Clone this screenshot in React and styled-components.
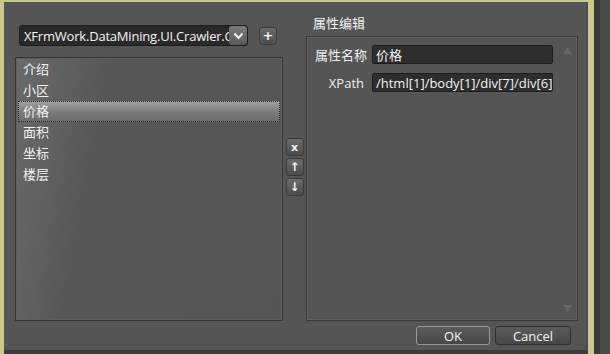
import styled, { createGlobalStyle } from "styled-components";

const GlobalStyle = createGlobalStyle`
  html, body {
    margin: 0;
    padding: 0;
    background: #3f3f3f;
  }
  body {
    font-family: "Open Sans", "Noto Sans CJK SC", sans-serif;
  }
`;

const Frame = styled.div`
  display: grid;
  grid-template-columns: 4px 584px 6px 16px;
  width: 610px;
  height: 354px;
  overflow: hidden;
`;

const YellowEdge = styled.div`
  background: #c9c98c;
`;

const DarkEdge = styled.div`
  background: linear-gradient(90deg, #3a3a3a 0 6px, #4a4a4a 6px);
`;

const Window = styled.div`
  display: flex;
  flex-direction: column;
  background: #555555;
  border-top: 2px solid #c9c98c;
  border-bottom: 4px solid #3c3c3c;
  box-shadow: inset -2px 0 0 #4a4a52;
`;

const Body = styled.div`
  display: flex;
  height: 319px;
  padding-left: 11px;
`;

const LeftColumn = styled.div`
  width: 268px;
  display: flex;
  flex-direction: column;
  padding-top: 23px;
  gap: 11px;
`;

const ComboRow = styled.div`
  display: flex;
  align-items: center;
  padding-left: 4px;
  gap: 11px;
`;

const Combo = styled.div`
  width: 229px;
  height: 21px;
  box-sizing: border-box;
  display: flex;
  align-items: center;
  background: #2a2a2a;
  border: 1px solid #1e1e1e;
  border-radius: 3px;
  padding-left: 4px;
  overflow: hidden;
`;

const ComboText = styled.span`
  flex: 1;
  min-width: 0;
  color: #f4f4f4;
  font-size: 13px;
  white-space: nowrap;
  overflow: hidden;
  letter-spacing: -0.2px;
`;

const ComboArrow = styled.div`
  width: 18px;
  height: 19px;
  flex-shrink: 0;
  display: flex;
  align-items: center;
  justify-content: center;
  background: linear-gradient(#7a7a7a, #5a5a5a);
  border-radius: 3px;
`;

const SmallButton = styled.div`
  width: 18px;
  height: 18px;
  box-sizing: border-box;
  display: flex;
  align-items: center;
  justify-content: center;
  background: linear-gradient(#6c6c6c, #4c4c4c);
  border: 1px solid #3a3a3a;
  border-radius: 3px;
  color: #f4f4f4;
  font-family: "DejaVu Sans", sans-serif;
  font-size: ${(p) => p.$size || 12}px;
  font-weight: bold;
  line-height: 1;
`;

const ListBox = styled.div`
  flex: 1;
  box-sizing: border-box;
  border: 1px solid #333;
  box-shadow: inset 0 0 0 1px #5e5e5e;
  background: linear-gradient(100deg, #6a6a6a 0%, #5f5f5f 18%, #575757 30%, #565656 100%);
  padding: 1px 2px;
`;

const ListItem = styled.div`
  height: 21px;
  box-sizing: border-box;
  display: flex;
  align-items: center;
  padding: 0 0 2px 5px;
  color: #f2f2f2;
  font-family: "Noto Sans CJK SC", sans-serif;
  font-size: 13px;
  line-height: 1;
  ${(p) =>
    p.$selected &&
    `
    background: linear-gradient(#a4a4a4, #7c7c7c 50%, #6c6c6c);
    outline: 1px dotted #2a2a2a;
    outline-offset: -1px;
  `}
`;

const MiddleColumn = styled.div`
  width: 23px;
  display: flex;
  flex-direction: column;
  align-items: center;
  padding-top: 136px;
  gap: 2px;
`;

const RightColumn = styled.div`
  width: 272px;
  display: flex;
  flex-direction: column;
`;

const GroupTitle = styled.div`
  height: 34px;
  box-sizing: border-box;
  padding: 13px 0 0 7px;
  color: #f2f2f2;
  font-family: "Noto Sans CJK SC", sans-serif;
  font-size: 13px;
  line-height: 16px;
`;

const GroupBox = styled.div`
  flex: 1;
  box-sizing: border-box;
  border: 1px solid #3a3a3a;
  box-shadow: inset 0 0 0 1px #626262;
  display: flex;
  padding: 8px 2px 6px 8px;
`;

const FieldList = styled.div`
  flex: 1;
  display: flex;
  flex-direction: column;
  gap: 9px;
`;

const FieldRow = styled.div`
  display: flex;
  align-items: center;
`;

const FieldLabel = styled.div`
  width: 49px;
  text-align: right;
  color: #eeeeee;
  font-family: "Open Sans", "Noto Sans CJK SC", sans-serif;
  font-size: 13px;
  margin-right: 8px;
  white-space: nowrap;
`;

const TextBox = styled.div`
  width: 181px;
  height: 19px;
  box-sizing: border-box;
  display: flex;
  align-items: center;
  background: #2e2e2e;
  border: 1px solid #1c1c1c;
  border-radius: 2px;
  padding-left: 3px;
  color: #f4f4f4;
  font-family: "Open Sans", "Noto Sans CJK SC", sans-serif;
  font-size: 13px;
  white-space: nowrap;
  overflow: hidden;
`;

const ScrollTrack = styled.div`
  width: 16px;
  display: flex;
  flex-direction: column;
  justify-content: space-between;
  align-items: center;
  padding: 2px 0;
`;

const Footer = styled.div`
  flex: 1;
  display: flex;
  justify-content: flex-end;
  align-items: center;
  gap: 5px;
  padding-right: 17px;
`;

const DialogButton = styled.div`
  width: ${(p) => p.$width}px;
  height: 19px;
  box-sizing: border-box;
  display: flex;
  align-items: center;
  justify-content: center;
  background: linear-gradient(#5c5c5c, #474747);
  border: 1px solid ${(p) => (p.$default ? "#9a9a9a" : "#2e2e2e")};
  border-radius: 3px;
  color: #f4f4f4;
  font-family: "Open Sans", sans-serif;
  font-size: 13px;
`;

const items = ["介绍", "小区", "价格", "面积", "坐标", "楼层"];

function Chevron() {
  return (
    <svg width="11" height="8" viewBox="0 0 11 8">
      <path d="M1.5 1.5 L5.5 6 L9.5 1.5" fill="none" stroke="#f0f0f0" strokeWidth="2" />
    </svg>
  );
}

function Triangle({ down }) {
  return (
    <svg width="9" height="7" viewBox="0 0 9 7">
      <path d={down ? "M0 0 L9 0 L4.5 7 Z" : "M0 7 L9 7 L4.5 0 Z"} fill="#686868" />
    </svg>
  );
}

export default function App() {
  return (
    <>
      <GlobalStyle />
      <Frame>
        <YellowEdge />
        <Window>
          <Body>
            <LeftColumn>
              <ComboRow>
                <Combo>
                  <ComboText>XFrmWork.DataMining.UI.Crawler.C</ComboText>
                  <ComboArrow>
                    <Chevron />
                  </ComboArrow>
                </Combo>
                <SmallButton $size={13}>+</SmallButton>
              </ComboRow>
              <ListBox>
                {items.map((it) => (
                  <ListItem key={it} $selected={it === "价格"}>
                    {it}
                  </ListItem>
                ))}
              </ListBox>
            </LeftColumn>
            <MiddleColumn>
              <SmallButton $size={11}>x</SmallButton>
              <SmallButton $size={12}>↑</SmallButton>
              <SmallButton $size={12}>↓</SmallButton>
            </MiddleColumn>
            <RightColumn>
              <GroupTitle>属性编辑</GroupTitle>
              <GroupBox>
                <FieldList>
                  <FieldRow>
                    <FieldLabel>属性名称</FieldLabel>
                    <TextBox>价格</TextBox>
                  </FieldRow>
                  <FieldRow>
                    <FieldLabel>XPath</FieldLabel>
                    <TextBox>/html[1]/body[1]/div[7]/div[6]/</TextBox>
                  </FieldRow>
                </FieldList>
                <ScrollTrack>
                  <Triangle />
                  <Triangle down />
                </ScrollTrack>
              </GroupBox>
            </RightColumn>
          </Body>
          <Footer>
            <DialogButton $width={74} $default>OK</DialogButton>
            <DialogButton $width={76}>Cancel</DialogButton>
          </Footer>
        </Window>
        <YellowEdge />
        <DarkEdge />
      </Frame>
    </>
  );
}
